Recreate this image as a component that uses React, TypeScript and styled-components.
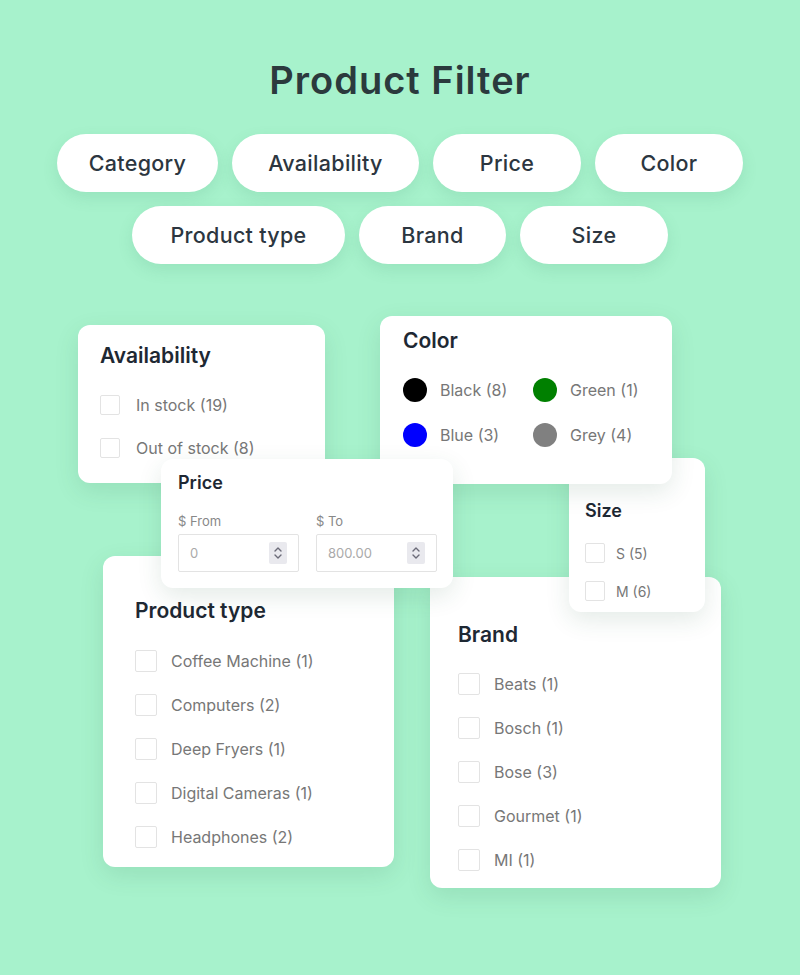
import React from 'react'
import styled, { createGlobalStyle } from 'styled-components'

const GlobalStyle = createGlobalStyle`
	body {
		margin: 0;
		background: #a7f2cc;
		font-family: Inter, Roboto, 'Liberation Sans', sans-serif;
	}
`

interface IPill {
	label: string
	width: number
}

const pillRows: IPill[][] = [
	[
		{ label: 'Category', width: 161 },
		{ label: 'Availability', width: 187 },
		{ label: 'Price', width: 148 },
		{ label: 'Color', width: 148 }
	],
	[
		{ label: 'Product type', width: 213 },
		{ label: 'Brand', width: 147 },
		{ label: 'Size', width: 148 }
	]
]

const colorItems = [
	{ name: 'Black (8)', swatch: '#000000' },
	{ name: 'Green (1)', swatch: '#008000' },
	{ name: 'Blue (3)', swatch: '#0000ff' },
	{ name: 'Grey (4)', swatch: '#808080' }
]

const productTypes = ['Coffee Machine (1)', 'Computers (2)', 'Deep Fryers (1)', 'Digital Cameras (1)', 'Headphones (2)']
const brands = ['Beats (1)', 'Bosch (1)', 'Bose (3)', 'Gourmet (1)', 'MI (1)']

function Spinner () {
	return (
		<SpinBox>
			<svg width='10' height='16' viewBox='0 0 10 16' fill='none' stroke='#6b6b78' strokeWidth='1.4' strokeLinecap='round' strokeLinejoin='round'>
				<path d='M2 6 L5 3 L8 6' />
				<path d='M2 10 L5 13 L8 10' />
			</svg>
		</SpinBox>
	)
}

function App () {
	return (
		<Page>
			<GlobalStyle />
			<Header>
				<Title>Product Filter</Title>
				<PillRows>
					{pillRows.map((row, i) => (
						<PillRow key={i}>
							{row.map(pill => (
								<Pill key={pill.label} w={pill.width}>{pill.label}</Pill>
							))}
						</PillRow>
					))}
				</PillRows>
			</Header>

			<Canvas>
				<Card x={78} y={25} w={247} h={158} z={1} pad='16px 22px'>
					<CardTitle>Availability</CardTitle>
					<CheckList gap={23} first={24} labelGap={16}>
						<CheckItem><Box size={20} />In stock (19)</CheckItem>
						<CheckItem><Box size={20} />Out of stock (8)</CheckItem>
					</CheckList>
				</Card>

				<Card x={380} y={16} w={292} h={168} z={3} pad='10px 23px'>
					<CardTitle>Color</CardTitle>
					<ColorGrid>
						{colorItems.map(c => (
							<ColorItem key={c.name}>
								<Swatch color={c.swatch} />
								{c.name}
							</ColorItem>
						))}
					</ColorGrid>
				</Card>

				<Card x={569} y={158} w={136} h={154} z={2} pad='40px 16px'>
					<SmallTitle>Size</SmallTitle>
					<CheckList gap={18} first={19} labelGap={11} small>
						<CheckItem><Box size={20} />S (5)</CheckItem>
						<CheckItem><Box size={20} />M (6)</CheckItem>
					</CheckList>
				</Card>

				<Card x={161} y={159} w={292} h={129} z={4} pad='11px 17px'>
					<SmallTitle>Price</SmallTitle>
					<PriceRow>
						<PriceField>
							<FieldLabel>$ From</FieldLabel>
							<NumberInput>
								<span>0</span>
								<Spinner />
							</NumberInput>
						</PriceField>
						<PriceField>
							<FieldLabel>$ To</FieldLabel>
							<NumberInput>
								<span>800.00</span>
								<Spinner />
							</NumberInput>
						</PriceField>
					</PriceRow>
				</Card>

				<Card x={103} y={256} w={291} h={311} z={1} pad='40px 32px'>
					<CardTitle>Product type</CardTitle>
					<CheckList gap={22} first={24} labelGap={14}>
						{productTypes.map(t => (
							<CheckItem key={t}><Box size={22} />{t}</CheckItem>
						))}
					</CheckList>
				</Card>

				<Card x={430} y={277} w={291} h={311} z={1} pad='43px 28px'>
					<CardTitle>Brand</CardTitle>
					<CheckList gap={22} first={23} labelGap={14}>
						{brands.map(b => (
							<CheckItem key={b}><Box size={22} />{b}</CheckItem>
						))}
					</CheckList>
				</Card>
			</Canvas>
		</Page>
	)
}

const Page = styled.div`
	width: 800px;
	height: 975px;
	overflow: hidden;
`
const Header = styled.header`
	padding-top: 59px;
	display: flex;
	flex-direction: column;
	align-items: center;
`
const Title = styled.h1`
	margin: 0;
	font-size: 38px;
	line-height: 42px;
	font-weight: 600;
	letter-spacing: 1px;
	color: #2b3a3d;
`
const PillRows = styled.div`
	margin-top: 33px;
	display: flex;
	flex-direction: column;
	gap: 14px;
`
const PillRow = styled.div`
	display: flex;
	justify-content: center;
	gap: 14px;
`
const Pill = styled.div<{ w: number }>`
	width: ${p => p.w}px;
	height: 58px;
	border-radius: 29px;
	background: #fff;
	box-shadow: 0 6px 16px rgba(40, 120, 80, 0.12);
	display: flex;
	align-items: center;
	justify-content: center;
	font-size: 21.5px;
	font-weight: 500;
	letter-spacing: 0.3px;
	color: #2c3640;
`
const Canvas = styled.div`
	position: relative;
	height: 675px;
	margin-top: 36px;
`

interface ICard {
	x: number
	y: number
	w: number
	h: number
	z: number
	pad: string
}

const Card = styled.div<ICard>`
	position: absolute;
	left: ${p => p.x}px;
	top: ${p => p.y}px;
	width: ${p => p.w}px;
	height: ${p => p.h}px;
	z-index: ${p => p.z};
	box-sizing: border-box;
	padding: ${p => p.pad};
	background: #fff;
	border-radius: 12px;
	box-shadow: 0 8px 24px rgba(30, 90, 60, 0.12);
`
const CardTitle = styled.h3`
	margin: 0;
	font-size: 21px;
	line-height: 30px;
	font-weight: 600;
	color: #1e2833;
`
const SmallTitle = styled.h4`
	margin: 0;
	font-size: 18px;
	line-height: 26px;
	font-weight: 600;
	color: #1e2833;
`

interface ICheckList {
	gap: number
	first: number
	labelGap: number
	small?: boolean
}

const CheckList = styled.ul<ICheckList>`
	list-style: none;
	margin: ${p => p.first}px 0 0;
	padding: 0;
	display: flex;
	flex-direction: column;
	gap: ${p => p.gap}px;
	font-size: ${p => p.small ? 14 : 16}px;
	color: #777;
	li {
		gap: ${p => p.labelGap}px;
	}
`
const CheckItem = styled.li`
	display: flex;
	align-items: center;
`
const Box = styled.span<{ size: number }>`
	flex: none;
	width: ${p => p.size - 2}px;
	height: ${p => p.size - 2}px;
	border: 1px solid #e3e3e3;
	border-radius: 2px;
`
const ColorGrid = styled.div`
	margin-top: 22px;
	display: grid;
	grid-template-columns: 130px auto;
	row-gap: 21px;
`
const ColorItem = styled.div`
	display: flex;
	align-items: center;
	gap: 13px;
	font-size: 16px;
	color: #777;
`
const Swatch = styled.span<{ color: string }>`
	width: 24px;
	height: 24px;
	border-radius: 50%;
	background: ${p => p.color};
`
const PriceRow = styled.div`
	margin-top: 17px;
	display: flex;
	gap: 17px;
`
const PriceField = styled.div`
	display: flex;
	flex-direction: column;
	gap: 4px;
`
const FieldLabel = styled.label`
	font-size: 13px;
	line-height: 17px;
	color: #888;
`
const NumberInput = styled.div`
	box-sizing: border-box;
	width: 121px;
	height: 38px;
	border: 1px solid #e3e3e3;
	border-radius: 2px;
	display: flex;
	align-items: center;
	justify-content: space-between;
	padding: 0 11px 0 11px;
	font-size: 13px;
	color: #aaa;
`
const SpinBox = styled.span`
	width: 18px;
	height: 22px;
	border-radius: 2px;
	background: #e9e9ee;
	display: flex;
	align-items: center;
	justify-content: center;
`

export default App
